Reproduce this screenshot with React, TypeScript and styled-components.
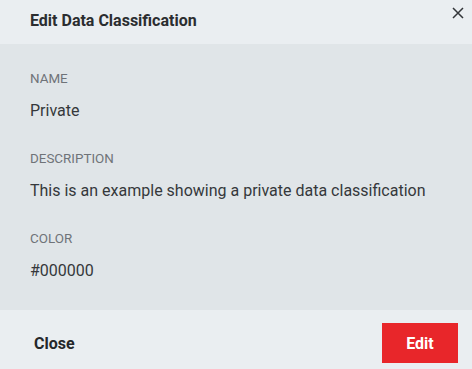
import React from 'react';
import styled, { createGlobalStyle } from 'styled-components';

const GlobalStyle = createGlobalStyle`
  html, body {
    margin: 0;
    padding: 0;
    background: #eaeef1;
  }
  body {
    font-family: Roboto, "Liberation Sans", Arial, sans-serif;
    -webkit-font-smoothing: antialiased;
  }
`;

const Dialog = styled.div`
  display: flex;
  flex-direction: column;
  width: 472px;
  min-height: 369px;
  background: #eaeef1;
`;

const Header = styled.header`
  display: flex;
  align-items: center;
  justify-content: space-between;
  height: 44px;
  box-sizing: border-box;
  padding: 0 6px 2px 30px;
  background: #eaeef1;
`;

const Title = styled.h2`
  margin: 0;
  font-size: 16px;
  font-weight: 700;
  line-height: 20px;
  color: #2b2d30;
`;

const CloseIcon = styled.button`
  align-self: flex-start;
  display: flex;
  align-items: center;
  justify-content: center;
  width: 16px;
  height: 16px;
  margin-top: 5px;
  padding: 0;
  border: none;
  background: transparent;
  color: #333639;
  cursor: pointer;
`;

const Body = styled.div`
  display: flex;
  flex-direction: column;
  gap: 30px;
  padding: 27px 30px 29px;
  background: #e0e5e8;
`;

const Field = styled.div`
  display: flex;
  flex-direction: column;
  gap: 14px;
`;

const Label = styled.div`
  font-size: 13.4px;
  line-height: 16px;
  text-transform: uppercase;
  color: #6f7378;
`;

const Value = styled.div`
  font-size: 16px;
  line-height: 20px;
  color: #35383b;
`;

const Footer = styled.footer`
  flex: 1;
  display: flex;
  align-items: flex-start;
  justify-content: space-between;
  padding: 13px 14px 13px 30px;
  background: #eaeef1;
`;

const Button = styled.button<{ $primary?: boolean }>`
  display: flex;
  align-items: center;
  justify-content: center;
  height: 40px;
  padding: ${(p) => (p.$primary ? '0' : '0 4px')};
  width: ${(p) => (p.$primary ? '76px' : 'auto')};
  border: none;
  border-radius: 0;
  font-family: inherit;
  font-size: 16px;
  font-weight: 700;
  color: ${(p) => (p.$primary ? '#ffffff' : '#25272a')};
  background: ${(p) => (p.$primary ? '#e8262a' : 'transparent')};
  cursor: pointer;
`;

const fields = [
  { label: 'Name', value: 'Private' },
  {
    label: 'Description',
    value: 'This is an example showing a private data classification',
  },
  { label: 'Color', value: '#000000' },
];

export default function App() {
  return (
    <>
      <GlobalStyle />
      <Dialog>
        <Header>
          <Title>Edit Data Classification</Title>
          <CloseIcon aria-label="Close">
            <svg width="12" height="12" viewBox="0 0 12 12">
              <path
                d="M1 1 L11 11 M11 1 L1 11"
                stroke="currentColor"
                strokeWidth="1.5"
                fill="none"
              />
            </svg>
          </CloseIcon>
        </Header>
        <Body>
          {fields.map((f) => (
            <Field key={f.label}>
              <Label>{f.label}</Label>
              <Value>{f.value}</Value>
            </Field>
          ))}
        </Body>
        <Footer>
          <Button>Close</Button>
          <Button $primary>Edit</Button>
        </Footer>
      </Dialog>
    </>
  );
}
